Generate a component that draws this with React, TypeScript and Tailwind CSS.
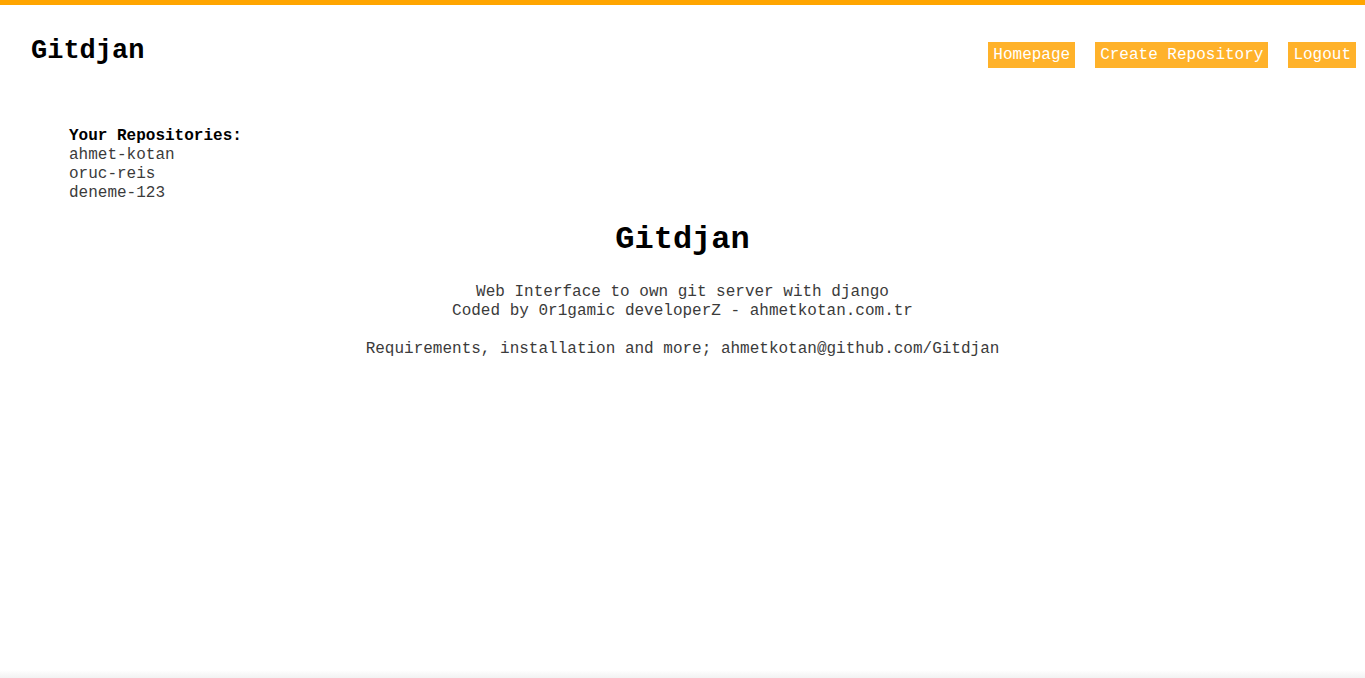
const links = ['Homepage', 'Create Repository', 'Logout']

const repos = ['ahmet-kotan', 'oruc-reis', 'deneme-123']

const App = () => {
  return (
    <div className="relative min-h-[678px] bg-white font-['Liberation_Mono',monospace] text-[#3b3b3b]">
      <div className="h-[5px] bg-[#ffa500]"></div>

      <header className="flex items-start justify-between pl-[31px] pr-[9px]">
        <h1 className="mt-[31px] text-[27px] font-bold leading-[30px] text-black">Gitdjan</h1>
        <nav className="mt-[37px] flex gap-[20px]">
          {links.map(link => (
            <a
              key={link}
              href="#"
              className="bg-[#ffb22a] px-[5px] py-[4px] text-[16px] leading-[18px] text-white"
            >
              {link}
            </a>
          ))}
        </nav>
      </header>

      <section className="mt-[59px] pl-[69px] text-[16px] leading-[19px]">
        <h4 className="font-bold text-black">Your Repositories:</h4>
        {repos.map(repo => (
          <div key={repo}>{repo}</div>
        ))}
      </section>

      <main className="mt-[18px] text-center text-[16px] leading-[19px]">
        <h2 className="text-[32px] font-bold leading-[37px] text-black">Gitdjan</h2>
        <p className="mt-[25px]">
          Web Interface to own git server with django
          <br />
          Coded by 0r1gamic developerZ - ahmetkotan.com.tr
        </p>
        <p className="mt-[19px]">Requirements, installation and more; ahmetkotan@github.com/Gitdjan</p>
      </main>

      <div className="absolute bottom-0 left-0 h-[8px] w-full bg-gradient-to-b from-white to-[#f2f2f2]"></div>
    </div>
  )
}

export default App
